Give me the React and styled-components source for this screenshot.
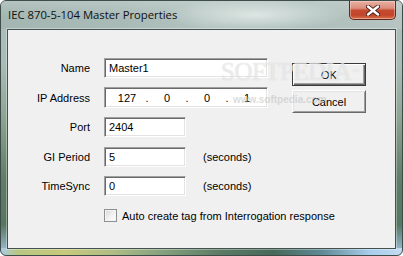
import React from 'react';
import styled, { createGlobalStyle } from 'styled-components';

const Global = createGlobalStyle`
  html, body { margin: 0; padding: 0; background: #ffffff; }
  body {
    width: 403px; height: 256px; overflow: hidden;
    font-family: "Liberation Sans", Arial, sans-serif;
  }
  * { box-sizing: border-box; }
`;

const Window = styled.div`
  position: relative;
  width: 403px;
  height: 256px;
  border: 1px solid #3e4c4a;
  border-radius: 6px 6px 6px 6px;
  overflow: hidden;
  display: flex;
  flex-direction: column;
  background:
    linear-gradient(to right, #a8cce8 0%, #b9c782 4%, #c8c97c 16%, #aebd86 28%, #86a27e 40%, #5a7a64 55%, #47695a 68%, #5f8a96 80%, #a9cdec 92%, #c3dbf2 100%) bottom / 100% 7px no-repeat,
    linear-gradient(to bottom, #aebfbb 0%, #a9bbb6 25%, #8ea695 45%, #5f7d68 70%, #557660 88%, #a4c6e2 100%);
`;

const TitleBar = styled.div`
  position: relative;
  height: 28px;
  flex: none;
  display: flex;
  align-items: flex-start;
  background:
    radial-gradient(ellipse 90px 16px at 255px 14px, rgba(235,242,240,0.75), rgba(235,242,240,0) 100%),
    linear-gradient(to bottom, rgba(255,255,255,0.18), rgba(255,255,255,0) 60%),
    linear-gradient(to right, #a3b6b1 0%, #a9bbb7 30%, #b3c3bf 50%, #aebfbb 75%, #b6c4c2 100%);
`;

const Title = styled.div`
  margin-left: 7px;
  line-height: 28px;
  font-family: "Open Sans", "Noto Sans", sans-serif;
  font-size: 11.3px;
  color: #101010;
  white-space: nowrap;
`;

const CloseButton = styled.div`
  margin-left: auto;
  margin-right: 6px;
  width: 47px;
  height: 19px;
  border: 1px solid #5e2a20;
  border-top: none;
  border-radius: 0 0 5px 5px;
  background: linear-gradient(to bottom, #e9b2a4 0%, #dc8d7c 40%, #c54a30 52%, #c2442a 78%, #d9734a 100%);
  box-shadow: inset 0 0 0 1px rgba(255, 220, 210, 0.45);
  display: flex;
  align-items: center;
  justify-content: center;
`;

const Client = styled.div`
  position: relative;
  flex: 1;
  margin: 0 6px 6px 6px;
  border: 1px solid #43524f;
  box-shadow: 0 0 0 1px rgba(255, 255, 255, 0.35);
  background: #f0f0f0;
  display: flex;
  font-size: 11px;
  color: #000;
`;

const Form = styled.div`
  width: 260px;
  padding-top: 28px;
  display: flex;
  flex-direction: column;
  gap: 9.5px;
`;

const Row = styled.div`
  display: flex;
  align-items: center;
  height: 20px;
`;

const Label = styled.div`
  width: 82px;
  margin-right: 14px;
  text-align: right;
  white-space: nowrap;
`;

const Sunken = styled.div`
  width: ${p => p.$w}px;
  height: ${p => p.$h || 20}px;
  background: #ffffff;
  border: 1px solid;
  border-color: #a0a0a0 #ffffff #ffffff #a0a0a0;
  box-shadow: inset 1px 1px 0 #696969, inset -1px -1px 0 #e3e3e3;
  display: flex;
  align-items: center;
  padding-left: 4px;
  white-space: nowrap;
`;

const IpBox = styled(Sunken)`
  padding-left: 6px;
`;

const IpSeg = styled.span`
  width: 32px;
  text-align: center;
`;

const IpDot = styled.span`
  width: 8px;
  text-align: center;
`;

const Unit = styled.span`
  margin-left: 17px;
  white-space: nowrap;
`;

const CheckRow = styled.label`
  display: flex;
  align-items: center;
  margin-left: 96px;
  margin-top: 3.5px;
  height: 13px;
  white-space: nowrap;
`;

const CheckBox = styled.span`
  width: 13px;
  height: 13px;
  border: 1px solid #8e8f8f;
  background: linear-gradient(135deg, #d6d6d6 0%, #f2f2f2 55%, #ffffff 100%);
  box-shadow: inset 0 0 0 1px #f4f4f4;
  margin-right: 5px;
  flex: none;
`;

const Buttons = styled.div`
  margin-left: 24px;
  padding-top: 33px;
  display: flex;
  flex-direction: column;
  gap: 4px;
`;

const Button = styled.div`
  width: 74px;
  height: 23px;
  display: flex;
  align-items: center;
  justify-content: center;
  background: #f0f0f0;
  border: 1px solid ${p => (p.$default ? '#3a3a3a' : '#ffffff')};
  ${p => (p.$default
    ? 'box-shadow: inset 1px 1px 0 #ffffff, inset -1px -1px 0 #696969, inset -2px -2px 0 #a0a0a0;'
    : 'border-color: #ffffff #696969 #696969 #ffffff; box-shadow: inset 1px 1px 0 #e3e3e3, inset -1px -1px 0 #a0a0a0;')}
`;

const Watermark = styled.div`
  position: absolute;
  left: 213px;
  top: 29px;
  font-family: "Liberation Serif", "Times New Roman", serif;
  font-size: 25px;
  letter-spacing: -0.5px;
  line-height: 26px;
  color: rgba(255, 255, 255, 0.55);
  text-shadow: 0 0 1px rgba(170, 170, 170, 0.55);
  pointer-events: none;
`;

const Tm = styled.span`
  font-size: 7px;
  vertical-align: top;
  margin-left: 1px;
`;

const WatermarkUrl = styled.div`
  position: absolute;
  left: 225px;
  top: 64px;
  font-family: "Liberation Sans Narrow", "Liberation Sans", sans-serif;
  font-size: 10px;
  font-weight: bold;
  color: rgba(190, 190, 190, 0.55);
  pointer-events: none;
`;

function CloseX() {
  return (
    <svg width="14" height="11" viewBox="0 0 14 11">
      <path d="M2 1.5 L12 9.5 M12 1.5 L2 9.5" stroke="#4a2018" strokeWidth="4.2" strokeLinecap="round" />
      <path d="M2 1.5 L12 9.5 M12 1.5 L2 9.5" stroke="#ffffff" strokeWidth="2.4" strokeLinecap="round" />
    </svg>
  );
}

export default function App() {
  return (
    <>
      <Global />
      <Window>
        <TitleBar>
          <Title>IEC 870-5-104 Master Properties</Title>
          <CloseButton>
            <CloseX />
          </CloseButton>
        </TitleBar>
        <Client>
          <Form>
            <Row>
              <Label>Name</Label>
              <Sunken $w={164}>Master1</Sunken>
            </Row>
            <Row>
              <Label>IP Address</Label>
              <IpBox $w={164} $h={21}>
                <IpSeg>127</IpSeg>
                <IpDot>.</IpDot>
                <IpSeg>0</IpSeg>
                <IpDot>.</IpDot>
                <IpSeg>0</IpSeg>
                <IpDot>.</IpDot>
                <IpSeg>1</IpSeg>
              </IpBox>
            </Row>
            <Row>
              <Label>Port</Label>
              <Sunken $w={82}>2404</Sunken>
            </Row>
            <Row>
              <Label>GI Period</Label>
              <Sunken $w={82}>5</Sunken>
              <Unit>(seconds)</Unit>
            </Row>
            <Row>
              <Label>TimeSync</Label>
              <Sunken $w={82}>0</Sunken>
              <Unit>(seconds)</Unit>
            </Row>
            <CheckRow>
              <CheckBox />
              Auto create tag from Interrogation response
            </CheckRow>
          </Form>
          <Buttons>
            <Button $default>OK</Button>
            <Button>Cancel</Button>
          </Buttons>
          <Watermark>SOFTPEDIA<Tm>™</Tm></Watermark>
          <WatermarkUrl>www.softpedia.com</WatermarkUrl>
        </Client>
      </Window>
    </>
  );
}
